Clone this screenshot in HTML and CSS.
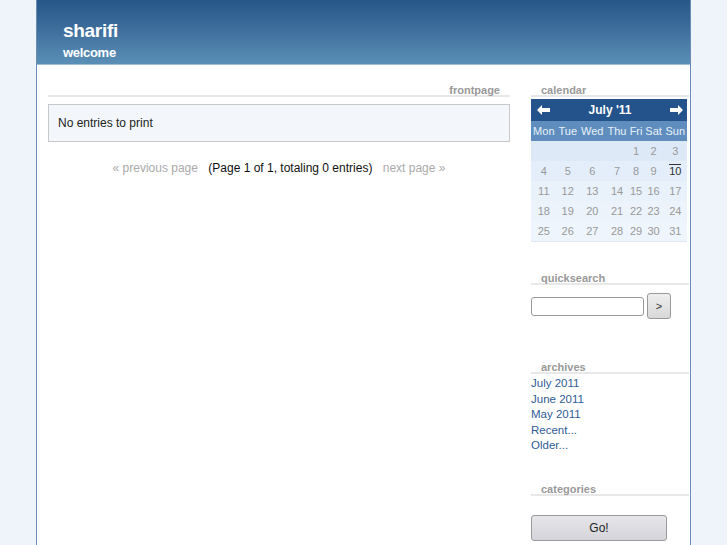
FILE: index.html
```html
<!DOCTYPE html>
<html>
<head>
<meta charset="utf-8">
<title>sharifi</title>
<link rel="stylesheet" href="styles.css">
</head>
<body>
<div class="wrap">
  <div class="header">
    <div class="site-title">sharifi</div>
    <div class="site-desc">welcome</div>
  </div>
  <div class="content">
    <div class="main">
      <div class="title right">frontpage</div>
      <div class="noentries">No entries to print</div>
      <div class="pager">
        <span class="muted">« previous page</span>
        <span class="info">(Page 1 of 1, totaling 0 entries)</span>
        <span class="muted">next page »</span>
      </div>
    </div>
    <div class="side">
      <div class="sec sec-cal">
        <div class="title">calendar</div>
        <table class="cal">
          <tr class="cal-head">
            <td class="arr"><svg width="13" height="10" viewBox="0 0 13 10"><path d="M0 5 L5 0 L5 3 L13 3 L13 7 L5 7 L5 10 Z" fill="#fff"/></svg></td>
            <td colspan="5" class="month">July '11</td>
            <td class="arr r"><svg width="13" height="10" viewBox="0 0 13 10"><path d="M13 5 L8 0 L8 3 L0 3 L0 7 L8 7 L8 10 Z" fill="#fff"/></svg></td>
          </tr>
          <tr class="days">
            <td>Mon</td><td>Tue</td><td>Wed</td><td>Thu</td><td>Fri</td><td>Sat</td><td>Sun</td>
          </tr>
          <tr class="w1"><td></td><td></td><td></td><td></td><td>1</td><td>2</td><td>3</td></tr>
          <tr class="w2"><td>4</td><td>5</td><td>6</td><td>7</td><td>8</td><td>9</td><td><span class="today">10</span></td></tr>
          <tr class="w3"><td>11</td><td>12</td><td>13</td><td>14</td><td>15</td><td>16</td><td>17</td></tr>
          <tr class="w4"><td>18</td><td>19</td><td>20</td><td>21</td><td>22</td><td>23</td><td>24</td></tr>
          <tr class="w5"><td>25</td><td>26</td><td>27</td><td>28</td><td>29</td><td>30</td><td>31</td></tr>
        </table>
      </div>
      <div class="sec sec-search">
        <div class="title">quicksearch</div>
        <div class="search">
          <input class="q" type="text">
          <button class="go-small">&gt;</button>
        </div>
      </div>
      <div class="sec sec-arch">
        <div class="title">archives</div>
        <ul class="links">
          <li><a href="#">July 2011</a></li>
          <li><a href="#">June 2011</a></li>
          <li><a href="#">May 2011</a></li>
          <li><a href="#">Recent...</a></li>
          <li><a href="#">Older...</a></li>
        </ul>
      </div>
      <div class="sec sec-cat">
        <div class="title">categories</div>
        <button class="go">Go!</button>
      </div>
    </div>
  </div>
</div>
</body>
</html>
```
FILE: styles.css
```css
html, body {
  margin: 0;
  padding: 0;
  background: #eef4fa;
  font-family: "Liberation Sans", Arial, sans-serif;
}
.wrap {
  width: 653px;
  margin: 0 auto;
  border-left: 1px solid #6b8db5;
  border-right: 1px solid #6b8db5;
  background: #fff;
  min-height: 545px;
}
.header {
  height: 65px;
  background: linear-gradient(to bottom, #275789 0%, #3b6b99 40%, #5a8fb6 100%);
  border-bottom: 1px solid #9cbcd6;
  padding-left: 26px;
  box-sizing: border-box;
  color: #fff;
  padding-top: 20px;
}
.site-title {
  font-size: 19px;
  font-weight: bold;
  line-height: 22px;
  letter-spacing: -0.3px;
}
.site-desc {
  font-size: 13px;
  font-weight: bold;
  line-height: 16px;
  margin-top: 3px;
  letter-spacing: -0.3px;
}
.content {
  display: grid;
  grid-template-columns: 462px 158px;
  column-gap: 21px;
  padding-left: 11px;
  padding-top: 20px;
}
.title {
  font-size: 11px;
  font-weight: bold;
  color: #999;
  line-height: 10px;
  padding-left: 10px;
  border-bottom: 2px solid #e8e8e8;
}
.title.right {
  text-align: right;
  padding-left: 0;
  padding-right: 10px;
}
.noentries {
  margin-top: 7px;
  border: 1px solid #c8c8c8;
  background: #f3f7fc;
  height: 36px;
  line-height: 36px;
  padding-left: 9px;
  font-size: 12px;
  color: #222;
}
.pager {
  margin-top: 19px;
  text-align: center;
  font-size: 12px;
  line-height: 15px;
  color: #111;
}
.pager .muted { color: #aaa; }
.pager .info { margin: 0 7px; }

.cal {
  margin-top: 2px;
  border-collapse: collapse;
  width: 156px;
  font-size: 11px;
}
.cal td {
  text-align: center;
  padding: 0;
  height: 20px;
  color: #999;
}
.cal-head td {
  background: #24528a;
  height: 22px;
  color: #fff;
}
.cal-head .month {
  font-weight: bold;
  font-size: 12px;
}
.cal-head .arr { text-align: left; padding-left: 6px; }
.cal-head .arr.r { text-align: right; padding-right: 4px; padding-left: 0; }
.cal-head svg { display: block; }
.cal-head .arr.r svg { margin-left: auto; }
.days td {
  background: #5f8ebe;
  color: #e8f0f8;
  height: 20px;
}
.w1 td { background: #dde9f7; }
.w2 td { background: #e4eefa; }
.w3 td { background: #e9f1fb; }
.w4 td { background: #ecf3fb; }
.w5 td { background: #eff5fc; }
.cal tr.w5 { border-bottom: 1px solid #dfe8f2; }
.today {
  color: #333;
  border-top: 1px solid #333;
  padding-top: 0;
}
.sec-search { margin-top: 31px; }
.search {
  display: flex;
  align-items: center;
  margin-top: 8px;
  gap: 3px;
}
.q {
  width: 113px;
  height: 19px;
  box-sizing: border-box;
  border: 1px solid #999;
  border-radius: 3px;
  margin: 0;
  padding: 0;
  background: #fff;
}
.go-small {
  width: 24px;
  height: 26px;
  border: 1px solid #999;
  border-radius: 3px;
  background: linear-gradient(to bottom, #eeeeee, #d8d8d8);
  font-family: "Liberation Sans", Arial, sans-serif;
  font-size: 11px;
  color: #333;
  padding: 0;
  margin: 0;
}
.sec-arch { margin-top: 43px; }
.links {
  list-style: none;
  margin: 2px 0 0 0;
  padding: 0;
  font-size: 11.5px;
  line-height: 15.5px;
}
.links a {
  color: #2f5b96;
  text-decoration: none;
}
.sec-cat { margin-top: 30px; }
.go {
  display: block;
  margin-top: 19px;
  width: 136px;
  height: 26px;
  border: 1px solid #9a9a9a;
  border-radius: 3px;
  background: linear-gradient(to bottom, #e6e6ea, #d4d4da);
  font-family: "Liberation Sans", Arial, sans-serif;
  font-size: 12px;
  color: #222;
  padding: 0;
  margin-left: 0;
}
```
